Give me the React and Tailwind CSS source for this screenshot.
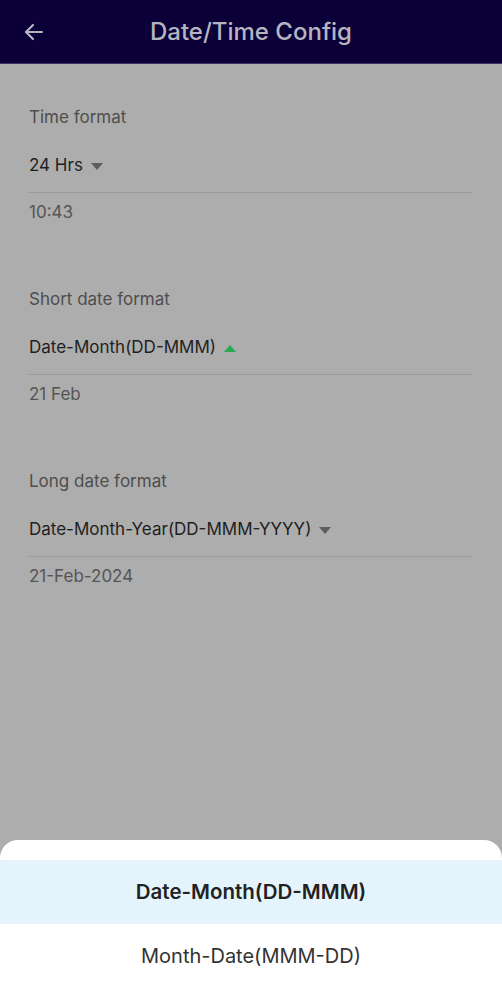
import React from 'react';

function Caret({ up = false, color = 'text-[#5e5e5e]' }) {
  return (
    <svg viewBox="0 0 12 7" className={`w-[12px] h-[7px] ${color}`} fill="currentColor">
      {up ? <path d="M0 7 L6 0 L12 7 Z" /> : <path d="M0 0 L12 0 L6 7 Z" />}
    </svg>
  );
}

function FormatField({ label, value, sample, open }) {
  return (
    <div className="flex flex-col">
      <div className="h-[24px] leading-[24px] text-[17px] text-[#4e4e4e]">{label}</div>
      <div className="mt-[25px] h-[24px] flex items-center gap-[8px] text-[17px] text-[#1f1f1f]">
        <span>{value}</span>
        {open ? <Caret up color="text-[#2aa84f]" /> : <Caret />}
      </div>
      <div className="mt-[14px] h-px bg-[#999999]" />
      <div className="mt-[7px] h-[24px] leading-[24px] text-[17px] text-[#555555]">{sample}</div>
    </div>
  );
}

export default function App() {
  const options = [
    { label: 'Date-Month(DD-MMM)', selected: true },
    { label: 'Month-Date(MMM-DD)', selected: false },
  ];

  return (
    <div className="relative w-[502px] h-[987px] overflow-hidden bg-[#adadad] font-['Inter','Noto_Sans',sans-serif]">
      {/* App bar */}
      <div className="h-[64px] bg-[#0b0037] border-b border-[#3a3362] flex items-center px-[22px]">
        <svg viewBox="0 0 24 24" className="w-[24px] h-[24px] text-[#b5b5c0]" fill="none" stroke="currentColor" strokeWidth="2.2" strokeLinecap="round" strokeLinejoin="round">
          <path d="M20 12H4" />
          <path d="M11 5l-7 7 7 7" />
        </svg>
        <div className="flex-1 text-center pr-[24px] text-[24px] font-medium text-[#b5b5c0]">Date/Time Config</div>
      </div>

      {/* Settings list */}
      <div className="px-[29px] pt-[41px] flex flex-col gap-[63px]">
        <FormatField label="Time format" value="24 Hrs" sample="10:43" />
        <FormatField label="Short date format" value="Date-Month(DD-MMM)" sample="21 Feb" open />
        <FormatField label="Long date format" value="Date-Month-Year(DD-MMM-YYYY)" sample="21-Feb-2024" />
      </div>

      {/* Bottom sheet */}
      <div className="absolute left-0 right-0 bottom-0 bg-white rounded-t-[18px] pt-[20px]">
        <div className="h-[64px] flex items-center justify-center text-[20.5px] bg-[#e5f4fc] font-semibold text-[#222222]">
          {options[0].label}
        </div>
        <div className="h-[63px] flex items-center justify-center text-[20px] text-[#333333]">
          {options[1].label}
        </div>
      </div>
    </div>
  );
}
